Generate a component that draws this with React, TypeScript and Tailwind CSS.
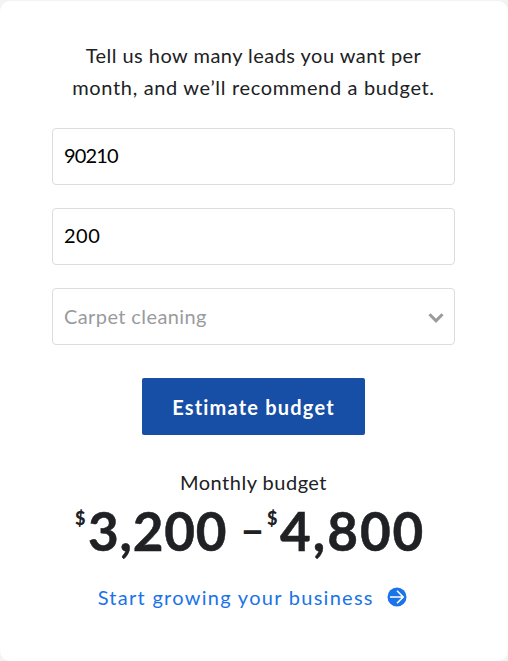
import { useState } from "react";

interface AmountProps {
  value: string;
  className: string;
}

function Amount({ value, className }: AmountProps) {
  return (
    <span className={`flex items-start ${className}`}>
      <span className="mr-px w-3 pt-[7px] text-lg leading-6 font-black tracking-normal">$</span>
      <span className="text-[53px] leading-[64px] font-bold [-webkit-text-stroke:0.5px_#202124]">{value}</span>
    </span>
  );
}

const INPUT_CLASS =
  "h-[57px] w-full rounded-[4px] border border-[#dadce0] bg-white px-[11px] pb-[3px] text-xl text-black outline-none";

export default function App() {
  const [zip, setZip] = useState("90210");
  const [leads, setLeads] = useState("200");

  return (
    <div className="h-[661px] w-[508px] bg-[#f3f3f3] pt-px font-['Lato',sans-serif] text-[#202124]">
      <main className="flex h-full flex-col items-center rounded-[10px] bg-white pt-[38px] pr-[53px] pl-[52px]">
        <p className="text-center text-xl leading-8 whitespace-nowrap">
          <span className="tracking-[0.47px]">Tell us how many leads you want per</span>
          <br />
          <span className="tracking-[0.66px]">month, and we’ll recommend a budget.</span>
        </p>

        <form className="mt-[25px] flex w-[403px] flex-col items-center gap-[23px]" onSubmit={(e) => e.preventDefault()}>
          <input
            className={`${INPUT_CLASS} tracking-[-0.85px]`}
            value={zip}
            onChange={(e) => setZip(e.target.value)}
          />
          <input
            className={`${INPUT_CLASS} tracking-[0.5px]`}
            value={leads}
            onChange={(e) => setLeads(e.target.value)}
          />
          <button
            type="button"
            className="flex h-[57px] w-full items-center justify-between rounded-[4px] border border-[#dadce0] pr-[10px] pb-px pl-[11px] text-xl tracking-[0.4px] text-[#999b9d]"
          >
            Carpet cleaning
            <svg className="mt-[3px] h-3 w-4" viewBox="0 0 16 12" fill="none" stroke="#9a9b9d" strokeWidth="3">
              <path d="M1.5 2.2 8 8.8l6.5-6.6" />
            </svg>
          </button>
          <button
            type="submit"
            className="mt-[10px] h-[57px] w-[223px] rounded-[2px] bg-[#174ea6] text-xl font-bold tracking-[1.2px] text-white"
          >
            Estimate budget
          </button>
        </form>

        <p className="mt-[31px] text-xl leading-8 tracking-[0.5px]">Monthly budget</p>
        <div className="mt-px flex w-[403px] items-start pl-[23px] whitespace-nowrap">
          <Amount value="3,200" className="w-[165px] tracking-[0.8px]" />
          <span className="w-5 text-center text-[43px] leading-[60px] font-bold">–</span>
          <Amount value="4,800" className="ml-[7px] tracking-[2px]" />
        </div>

        <a href="#" className="mt-[18px] mr-0.5 flex items-center text-xl leading-8 tracking-[1.28px] whitespace-nowrap text-[#1a73e8]">
          Start growing your business
          <svg className="ml-[13.5px] size-5" viewBox="0 0 20 20" fill="none">
            <circle cx="10" cy="10" r="9.5" fill="#1a73e8" />
            <path d="M3 10h13M10 3.8l6.2 6.2-6.2 6.2" stroke="#fff" strokeWidth="1.6" />
          </svg>
        </a>
      </main>
    </div>
  );
}
